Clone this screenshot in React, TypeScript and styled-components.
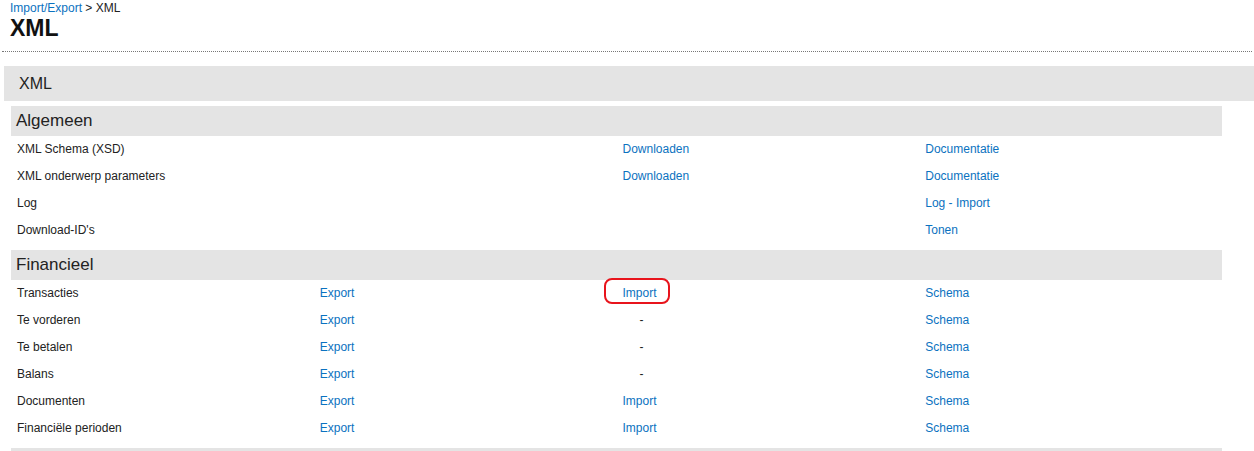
import styled, { createGlobalStyle } from "styled-components";

type Row = {
  label: string;
  export?: string;
  import?: string;
  dash?: boolean;
  last: string;
  marked?: boolean;
};

const algemeen: Row[] = [
  { label: "XML Schema (XSD)", import: "Downloaden", last: "Documentatie" },
  { label: "XML onderwerp parameters", import: "Downloaden", last: "Documentatie" },
  { label: "Log", last: "Log - Import" },
  { label: "Download-ID's", last: "Tonen" },
];

const financieel: Row[] = [
  { label: "Transacties", export: "Export", import: "Import", last: "Schema", marked: true },
  { label: "Te vorderen", export: "Export", dash: true, last: "Schema" },
  { label: "Te betalen", export: "Export", dash: true, last: "Schema" },
  { label: "Balans", export: "Export", dash: true, last: "Schema" },
  { label: "Documenten", export: "Export", import: "Import", last: "Schema" },
  { label: "Financiële perioden", export: "Export", import: "Import", last: "Schema" },
];

const GlobalStyle = createGlobalStyle`
  body {
    margin: 0;
    background: #fff;
    font-family: "Liberation Sans", Arial, sans-serif;
    color: #222;
  }
`;

const Page = styled.div`
  width: 1254px;
`;

const Header = styled.div`
  padding: 1px 0 0 10px;
`;

const Crumbs = styled.div`
  font-size: 12px;
  line-height: 14px;
  color: #222;
`;

const Link = styled.a`
  color: #0b72c0;
  text-decoration: none;
  cursor: pointer;
`;

const Title = styled.h1`
  margin: 0;
  font-size: 23px;
  line-height: 26px;
  font-weight: 700;
  color: #111;
`;

const Divider = styled.div`
  margin: 10px 2px 0 2px;
  border-top: 1px dotted #777;
`;

const Panel = styled.div`
  margin: 14px 0 0 4px;
`;

const PanelHead = styled.div`
  height: 35px;
  background: #e4e4e4;
  display: flex;
  align-items: center;
  padding-left: 15px;
  font-size: 16px;
  color: #222;
`;

const Body = styled.div`
  margin: 5px 32px 0 7px;
  border-bottom: 3px solid #e4e4e4;
`;

const Section = styled.div`
  margin-bottom: 6px;
`;

const SectionHead = styled.div`
  height: 30px;
  background: #e4e4e4;
  display: flex;
  align-items: center;
  padding-left: 5px;
  font-size: 17px;
  color: #222;
`;

const TableRow = styled.div`
  box-sizing: border-box;
  display: grid;
  grid-template-columns: repeat(4, 1fr);
  height: 27px;
  padding-bottom: 2px;
  align-items: center;
  font-size: 12px;
`;

const Cell = styled.div`
  padding-left: 6px;
  position: relative;
`;

const Dash = styled.span`
  padding-left: 17px;
`;

const Anchor = styled.span`
  position: relative;
`;

const Mark = styled.span`
  position: absolute;
  left: -19px;
  top: -8px;
  width: 62px;
  height: 22px;
  border: 2px solid #e8141c;
  border-radius: 8px;
  pointer-events: none;
`;

const Rows = ({ rows }: { rows: Row[] }) => (
  <>
    {rows.map((r) => (
      <TableRow key={r.label}>
        <Cell>{r.label}</Cell>
        <Cell>{r.export && <Link>{r.export}</Link>}</Cell>
        <Cell>
          {r.import && (
            <Anchor>
              <Link>{r.import}</Link>
              {r.marked && <Mark />}
            </Anchor>
          )}
          {r.dash && <Dash>-</Dash>}
        </Cell>
        <Cell>
          <Link>{r.last}</Link>
        </Cell>
      </TableRow>
    ))}
  </>
);

export default function App() {
  return (
    <Page>
      <GlobalStyle />
      <Header>
        <Crumbs>
          <Link>Import/Export</Link> &gt; XML
        </Crumbs>
        <Title>XML</Title>
      </Header>
      <Divider />
      <Panel>
        <PanelHead>XML</PanelHead>
        <Body>
          <Section>
            <SectionHead>Algemeen</SectionHead>
            <Rows rows={algemeen} />
          </Section>
          <Section>
            <SectionHead>Financieel</SectionHead>
            <Rows rows={financieel} />
          </Section>
        </Body>
      </Panel>
    </Page>
  );
}
